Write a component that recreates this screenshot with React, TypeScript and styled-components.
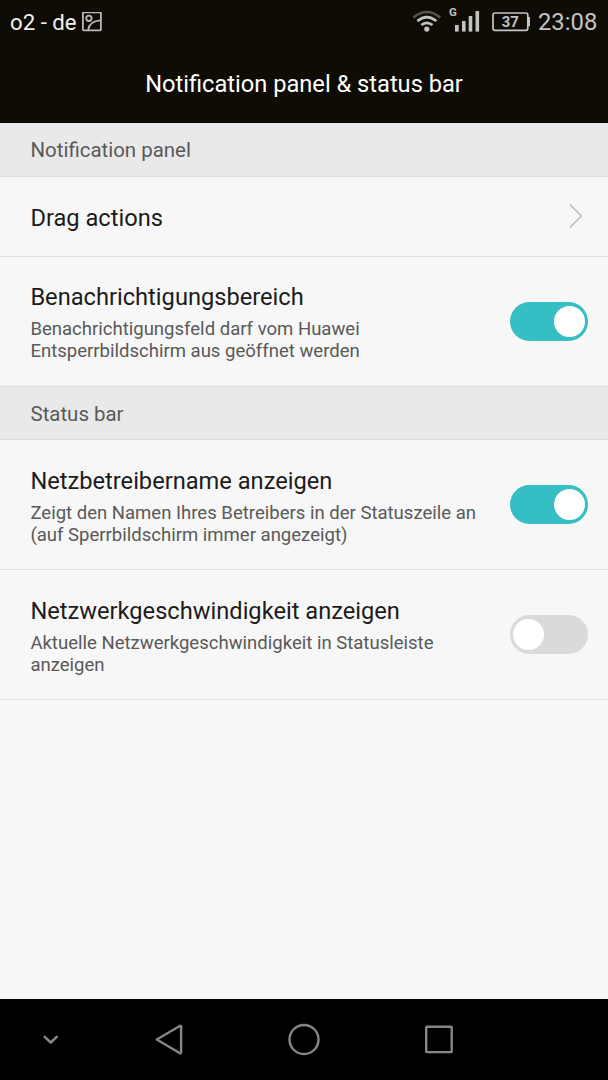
import React from "react";
import styled, { createGlobalStyle } from "styled-components";

const GlobalStyle = createGlobalStyle`
  * { box-sizing: border-box; }
  body { margin: 0; background: #f7f7f7; font-family: Roboto, sans-serif; }
`;

const Screen = styled.div`
  display: flex;
  flex-direction: column;
  width: 608px;
  height: 1080px;
  overflow: hidden;
  background: #f7f7f7;
`;

const Top = styled.header`
  height: 123px;
  background: #0f0c05;
  border-bottom: 1px solid #000;
`;

const StatusBar = styled.div`
  display: flex;
  align-items: center;
  height: 43px;
  padding: 0 11px 0 10px;
  color: #f0f0f0;
  font-size: 22.2px;
  line-height: 43px;
`;

const Carrier = styled.span`
  width: 72px;
  padding-top: 1px;
  white-space: nowrap;
`;

const StatusIcons = styled.div`
  display: flex;
  align-items: center;
  margin-left: auto;
`;

const Clock = styled.span`
  width: 59px;
  margin-left: 8px;
  padding-top: 2px;
  color: #c3c3c3;
  font-size: 23.8px;
  white-space: nowrap;
`;

const Title = styled.h1`
  margin: 0;
  padding-top: 27px;
  color: #fff;
  font-size: 23.65px;
  font-weight: 400;
  line-height: 28px;
  text-align: center;
  white-space: nowrap;
`;

const Content = styled.main`
  flex: 1;
`;

const SectionHeader = styled.h2<{ $height: number }>`
  height: ${(p) => p.$height}px;
  margin: 0;
  padding: 1px 0 0 30.5px;
  border-bottom: 1px solid #dcdcdc;
  background: #e9e9e9;
  color: #595959;
  font-size: 20.45px;
  font-weight: 400;
  line-height: 53px;
`;

const Row = styled.div<{ $height: number }>`
  display: flex;
  align-items: center;
  justify-content: space-between;
  height: ${(p) => p.$height}px;
  padding: 0 20px 0 30.4px;
  border-bottom: 1px solid #dedede;
`;

const RowText = styled.div<{ $offset: number }>`
  display: flex;
  flex-direction: column;
  gap: 7px;
  padding-top: ${(p) => p.$offset}px;
`;

const RowTitle = styled.div`
  color: #1c1c1c;
  font-size: 23.65px;
  line-height: 28px;
  white-space: nowrap;
`;

const SingleTitle = styled(RowTitle)`
  padding-top: 2px;
`;

const RowSummary = styled.div`
  color: #595959;
  font-size: 18.54px;
  line-height: 22px;
  white-space: pre-line;
`;

const Track = styled.div<{ $on: boolean }>`
  display: flex;
  align-items: center;
  justify-content: ${(p) => (p.$on ? "flex-end" : "flex-start")};
  width: 78px;
  height: 39px;
  padding: 0 3px;
  border-radius: 20px;
  background: ${(p) => (p.$on ? "#35bec4" : "#dadada")};
`;

const Thumb = styled.div`
  width: 31px;
  height: 31px;
  border-radius: 50%;
  background: #fff;
`;

const Chevron = styled.svg`
  display: block;
  margin: 0 5px 2px 0;
`;

const NavBar = styled.nav`
  height: 81px;
  background: #000;
`;

const Switch = ({ on }: { on: boolean }) => (
  <Track $on={on} role="switch" aria-checked={on}>
    <Thumb />
  </Track>
);

type SettingProps = { title: string; summary: string; on: boolean; offset?: number };

const Setting = ({ title, summary, on, offset = 4 }: SettingProps) => (
  <Row $height={130}>
    <RowText $offset={offset}>
      <RowTitle>{title}</RowTitle>
      <RowSummary>{summary}</RowSummary>
    </RowText>
    <Switch on={on} />
  </Row>
);

const PictureIcon = () => (
  <svg width="20" height="20" viewBox="0 0 20 20" fill="none" stroke="#b9b9b9" strokeWidth="1.8">
    <rect x="0.9" y="0.4" width="18" height="18" rx="0.8" />
    <circle cx="6.9" cy="6.3" r="2.7" />
    <path d="M6.2 18C6.8 12.6 11 8.8 18.5 8.4" />
  </svg>
);

const SignalIcons = () => (
  <svg width="120" height="43" viewBox="410 0 120 43" fill="#c3c3c3">
    <g fill="none" strokeWidth="2.6">
      <path d="M413.4 17.6Q426.8 6.4 440.3 17.6" stroke="#55534e" />
      <path d="M417.3 21Q426.8 13.2 436.4 21" stroke="#c3c3c3" />
      <path d="M421.3 25Q426.8 20.6 432.5 25" stroke="#c3c3c3" />
    </g>
    <circle cx="426.8" cy="29.1" r="2.6" />
    <text x="449.1" y="16" fontSize="11.5" fontWeight="700" fontFamily="Roboto, sans-serif">G</text>
    <rect x="455" y="25" width="3.7" height="6.6" />
    <rect x="462" y="21" width="3.6" height="10.6" />
    <rect x="468.7" y="16" width="3.6" height="15.6" />
    <rect x="475.5" y="11" width="3.6" height="20.6" />
    <rect x="493" y="13" width="34.8" height="17.3" rx="2" fill="none" stroke="#c3c3c3" strokeWidth="1.7" />
    <path d="M528 17H530V26.3H528Z" />
    <text x="510.2" y="27.3" fontSize="15.3" fontWeight="700" textAnchor="middle" textLength="17" lengthAdjust="spacingAndGlyphs" fontFamily="Roboto, sans-serif">37</text>
  </svg>
);

export default function App() {
  return (
    <>
      <GlobalStyle />
      <Screen>
        <Top>
          <StatusBar>
            <Carrier>o2 - de</Carrier>
            <PictureIcon />
            <StatusIcons>
              <SignalIcons />
              <Clock>23:08</Clock>
            </StatusIcons>
          </StatusBar>
          <Title>Notification panel &amp; status bar</Title>
        </Top>
        <Content>
          <SectionHeader $height={54}>Notification panel</SectionHeader>
          <Row $height={80}>
            <SingleTitle>Drag actions</SingleTitle>
            <Chevron width="14" height="26" viewBox="0 0 14 26" fill="none" stroke="#b4b4b4" strokeWidth="1.3">
              <path d="M1 1.5L12.3 13L1 24.5" />
            </Chevron>
          </Row>
          <Setting
            title="Benachrichtigungsbereich"
            summary={"Benachrichtigungsfeld darf vom Huawei\nEntsperrbildschirm aus geöffnet werden"}
            on
            offset={2}
          />
          <SectionHeader $height={53}>Status bar</SectionHeader>
          <Setting
            title="Netzbetreibername anzeigen"
            summary={"Zeigt den Namen Ihres Betreibers in der Statuszeile an\n(auf Sperrbildschirm immer angezeigt)"}
            on
          />
          <Setting
            title="Netzwerkgeschwindigkeit anzeigen"
            summary={"Aktuelle Netzwerkgeschwindigkeit in Statusleiste\nanzeigen"}
            on={false}
          />
        </Content>
        <NavBar>
          <svg width="608" height="81" viewBox="0 999 608 81" fill="none" stroke="#868686" strokeWidth="2.4" strokeLinecap="round" strokeLinejoin="round">
            <path d="M44.7 1036.9L50.7 1042.5L56.7 1036.9" strokeWidth="2.6" />
            <path d="M156.8 1039.5L180.2 1025.8Q181.1 1025.5 181.1 1026.5V1052Q181.1 1053.6 180 1053.2Z" />
            <circle cx="304" cy="1039.5" r="14.5" />
            <rect x="426.2" y="1026.7" width="25.5" height="25.4" rx="0.6" />
          </svg>
        </NavBar>
      </Screen>
    </>
  );
}
